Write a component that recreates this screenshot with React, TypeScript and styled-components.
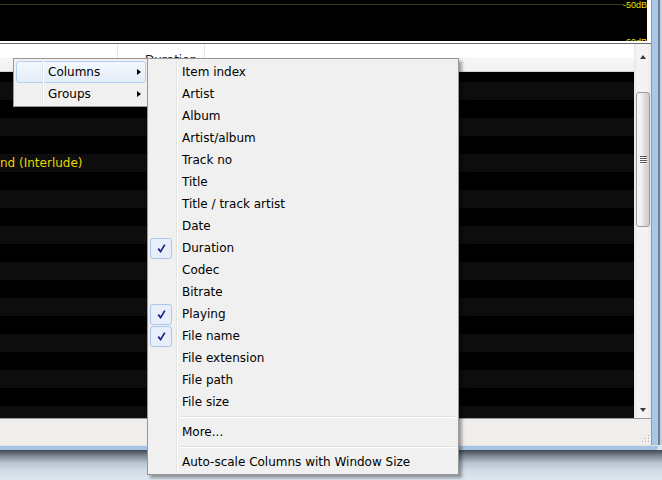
import React from 'react';
import styled, { createGlobalStyle } from 'styled-components';

const GlobalStyle = createGlobalStyle`
  html, body {
    margin: 0;
    padding: 0;
  }
  body {
    width: 662px;
    height: 480px;
    overflow: hidden;
    background: #dde6ef;
    font-family: "DejaVu Sans", "Noto Sans", sans-serif;
    font-size: 12px;
  }
`;

const Screen = styled.div`
  position: relative;
  width: 662px;
  height: 480px;
  overflow: hidden;
  display: flex;
  flex-direction: column;
`;

const Window = styled.div`
  height: 450px;
  display: flex;
  flex-direction: column;
`;

const WindowRow = styled.div`
  flex: 1;
  display: flex;
  min-height: 0;
`;

const WindowBody = styled.div`
  flex: 1;
  display: flex;
  flex-direction: column;
  background: #ffffff;
  min-width: 0;
`;

const RightFrame = styled.div`
  width: 11px;
  background: linear-gradient(
    to right,
    #8f9baa 0,
    #8f9baa 1px,
    #a9c7e9 1px,
    #a9c7e9 7px,
    #6f7f92 7px,
    #6f7f92 9px,
    #c3ced9 9px
  );
`;

const BottomFrame = styled.div`
  height: 5px;
  background: linear-gradient(#e4e4e4 0, #e4e4e4 1px, #a6c4e6 1px, #a6c4e6 5px);
  margin-right: 4px;
  border-bottom-right-radius: 3px;
`;

const Desktop = styled.div`
  flex: 1;
  background: linear-gradient(#404852 0, #7e8995 6px, #b8c4d0 13px, #d3dde8 21px, #dde6ef 30px);
`;

const Visualizer = styled.div`
  height: 41px;
  padding: 0 4px 2px 0;
  border-bottom: 1px solid #6b6b6b;
  background: #ffffff;
`;

const VizCanvas = styled.svg`
  display: block;
  width: 647px;
  height: 41px;
  background: #000000;
`;

const ListView = styled.div`
  flex: 1;
  display: flex;
  min-height: 0;
`;

const ListPane = styled.div`
  flex: 1;
  display: flex;
  flex-direction: column;
  min-width: 0;
`;

const Header = styled.div`
  height: 27px;
  display: flex;
  border-bottom: 1px solid #d5d5d5;
  background: linear-gradient(#ffffff 0, #ffffff 13px, #f6f7f8 14px, #eff0f2 27px);
`;

const HeaderCell = styled.div<{ $width: number }>`
  width: ${p => p.$width}px;
  box-sizing: border-box;
  border-right: 1px solid #e3e6ea;
  padding: 9px 0 0 27px;
  color: #1a1a1a;
  white-space: nowrap;
  overflow: hidden;
`;

const Rows = styled.div`
  flex: 1;
  background: #000000;
  overflow: hidden;
`;

const RowList = styled.div`
  margin-top: -8px;
`;

const Row = styled.div<{ $stripe: boolean }>`
  height: 18px;
  line-height: 18px;
  background: ${p => (p.$stripe ? '#0d0d0d' : '#000000')};
  color: #e6d600;
  white-space: nowrap;
  overflow: hidden;
`;

const Scrollbar = styled.div`
  width: 17px;
  display: flex;
  flex-direction: column;
  background: linear-gradient(to right, #e6e6e6 0, #f3f3f3 3px, #f3f3f3 13px, #e9e9e9 17px);
`;

const ScrollButton = styled.div<{ $height: number }>`
  height: ${p => p.$height}px;
  display: flex;
  align-items: center;
  justify-content: center;
`;

const ArrowUp = styled.div`
  width: 0;
  height: 0;
  border-left: 3.5px solid transparent;
  border-right: 3.5px solid transparent;
  border-bottom: 4px solid #3a3a3a;
`;

const ArrowDown = styled.div`
  width: 0;
  height: 0;
  border-left: 3.5px solid transparent;
  border-right: 3.5px solid transparent;
  border-top: 4px solid #3a3a3a;
`;

const Track = styled.div`
  flex: 1;
  padding-top: 22px;
`;

const Thumb = styled.div`
  margin: 0 1px 0 2px;
  height: 135px;
  box-sizing: border-box;
  border: 1px solid #9b9b9b;
  border-radius: 3px;
  background: linear-gradient(to right, #f7f7f7 0, #ececec 45%, #dcdcdc 60%, #cdcdcd 100%);
  display: flex;
  flex-direction: column;
  align-items: center;
  justify-content: center;
  gap: 1px;
`;

const GripLine = styled.div`
  width: 7px;
  height: 1px;
  background: #575757;
  box-shadow: 0 1px 0 #ffffff;
`;

const StatusBar = styled.div`
  height: 24px;
  border-top: 1px solid #9a9a9a;
  background: #f0eeec;
  display: flex;
  justify-content: flex-end;
  align-items: flex-end;
  padding: 0 1px 2px 0;
  box-sizing: content-box;
`;

const Menu = styled.div<{ $left: number; $top: number; $width: number }>`
  position: absolute;
  left: ${p => p.$left}px;
  top: ${p => p.$top}px;
  width: ${p => p.$width}px;
  box-sizing: border-box;
  border: 1px solid #979797;
  background: #f0f0f0;
  padding: 2px 1px 1px 2px;
  box-shadow: 3px 3px 3px rgba(0, 0, 0, 0.35);
  color: #000000;

  &::before {
    content: '';
    position: absolute;
    top: 2px;
    bottom: 1px;
    left: 28px;
    width: 1px;
    background: #e2e3e3;
    border-right: 1px solid #ffffff;
    z-index: 1;
  }
`;

const Item = styled.div<{ $active?: boolean }>`
  position: relative;
  height: 22px;
  display: flex;
  align-items: center;
  box-sizing: border-box;
  border: 1px solid ${p => (p.$active ? '#b4d0f3' : 'transparent')};
  border-radius: 3px;
  background: ${p => (p.$active ? 'linear-gradient(#f4f8fd, #e2ecf9)' : 'transparent')};
  padding-right: 4px;
  white-space: nowrap;
`;

const CheckSlot = styled.div<{ $checked?: boolean }>`
  width: 22px;
  height: 21px;
  margin: 0 10px 0 -1px;
  box-sizing: border-box;
  border: 1px solid ${p => (p.$checked ? '#a9c6ee' : 'transparent')};
  border-radius: 3px;
  background: ${p => (p.$checked ? '#e8eff9' : 'transparent')};
  display: flex;
  align-items: center;
  justify-content: center;
`;

const Label = styled.span`
  flex: 1;
`;

const SubArrow = styled.div`
  width: 0;
  height: 0;
  border-top: 3.5px solid transparent;
  border-bottom: 3.5px solid transparent;
  border-left: 4px solid #000000;
`;

const Separator = styled.div`
  height: 8px;
  display: flex;
  align-items: center;
  padding-left: 30px;

  &::after {
    content: '';
    flex: 1;
    height: 1px;
    background: #e0e0e0;
    border-bottom: 1px solid #ffffff;
    margin-right: 2px;
  }
`;

const columnItems: { label: string; checked?: boolean }[] = [
  { label: 'Item index' },
  { label: 'Artist' },
  { label: 'Album' },
  { label: 'Artist/album' },
  { label: 'Track no' },
  { label: 'Title' },
  { label: 'Title / track artist' },
  { label: 'Date' },
  { label: 'Duration', checked: true },
  { label: 'Codec' },
  { label: 'Bitrate' },
  { label: 'Playing', checked: true },
  { label: 'File name', checked: true },
  { label: 'File extension' },
  { label: 'File path' },
  { label: 'File size' },
];

const rows = Array.from({ length: 20 }, (_, i) => (i === 5 ? 'nd (Interlude)' : ''));

const CheckMark = () => (
  <svg width="11" height="11" viewBox="0 0 11 11">
    <path d="M2.2 5.6 L4.6 8.6 L8.8 1.6" fill="none" stroke="#17238c" strokeWidth="1.7" />
  </svg>
);

const SizeGrip = () => (
  <svg width="9" height="9" viewBox="0 0 9 9">
    {[[7, 1], [4, 4], [7, 4], [1, 7], [4, 7], [7, 7]].map(([x, y], i) => (
      <g key={i}>
        <rect x={x + 1} y={y + 1} width="1" height="1" fill="#ffffff" />
        <rect x={x} y={y} width="1" height="1" fill="#a3a3a3" />
      </g>
    ))}
  </svg>
);

const App: React.FC = () => {
  return (
    <Screen>
      <GlobalStyle />
      <Window>
        <WindowRow>
          <WindowBody>
            <Visualizer>
              <VizCanvas viewBox="0 0 647 41">
                <line x1="0" y1="4.5" x2="624" y2="4.5" stroke="#3c3c12" strokeWidth="1" />
                <text x="647" y="7.5" textAnchor="end" fill="#e8e600" fontSize="9" fontFamily="Liberation Sans, sans-serif">-50dB</text>
                <text x="647" y="45" textAnchor="end" fill="#e8e600" fontSize="9" fontFamily="Liberation Sans, sans-serif">-60dB</text>
              </VizCanvas>
            </Visualizer>
            <ListView>
              <ListPane>
                <Header>
                  <HeaderCell $width={118} />
                  <HeaderCell $width={87}>Duration</HeaderCell>
                </Header>
                <Rows>
                  <RowList>
                    {rows.map((text, i) => (
                      <Row key={i} $stripe={i % 2 === 1}>{text}</Row>
                    ))}
                  </RowList>
                </Rows>
              </ListPane>
              <Scrollbar>
                <ScrollButton $height={26}><ArrowUp /></ScrollButton>
                <Track>
                  <Thumb>
                    <GripLine />
                    <GripLine />
                    <GripLine />
                    <GripLine />
                  </Thumb>
                </Track>
                <ScrollButton $height={17}><ArrowDown /></ScrollButton>
              </Scrollbar>
            </ListView>
            <StatusBar>
              <SizeGrip />
            </StatusBar>
          </WindowBody>
          <RightFrame />
        </WindowRow>
        <BottomFrame />
      </Window>
      <Desktop />

      <Menu $left={13} $top={58} $width={135}>
        <Item $active>
          <CheckSlot />
          <Label>Columns</Label>
          <SubArrow />
        </Item>
        <Item>
          <CheckSlot />
          <Label>Groups</Label>
          <SubArrow />
        </Item>
      </Menu>

      <Menu $left={147} $top={58} $width={312}>
        {columnItems.map(item => (
          <Item key={item.label}>
            <CheckSlot $checked={item.checked}>{item.checked && <CheckMark />}</CheckSlot>
            <Label>{item.label}</Label>
          </Item>
        ))}
        <Separator />
        <Item>
          <CheckSlot />
          <Label>More...</Label>
        </Item>
        <Separator />
        <Item>
          <CheckSlot />
          <Label>Auto-scale Columns with Window Size</Label>
        </Item>
      </Menu>
    </Screen>
  );
};

export default App;
